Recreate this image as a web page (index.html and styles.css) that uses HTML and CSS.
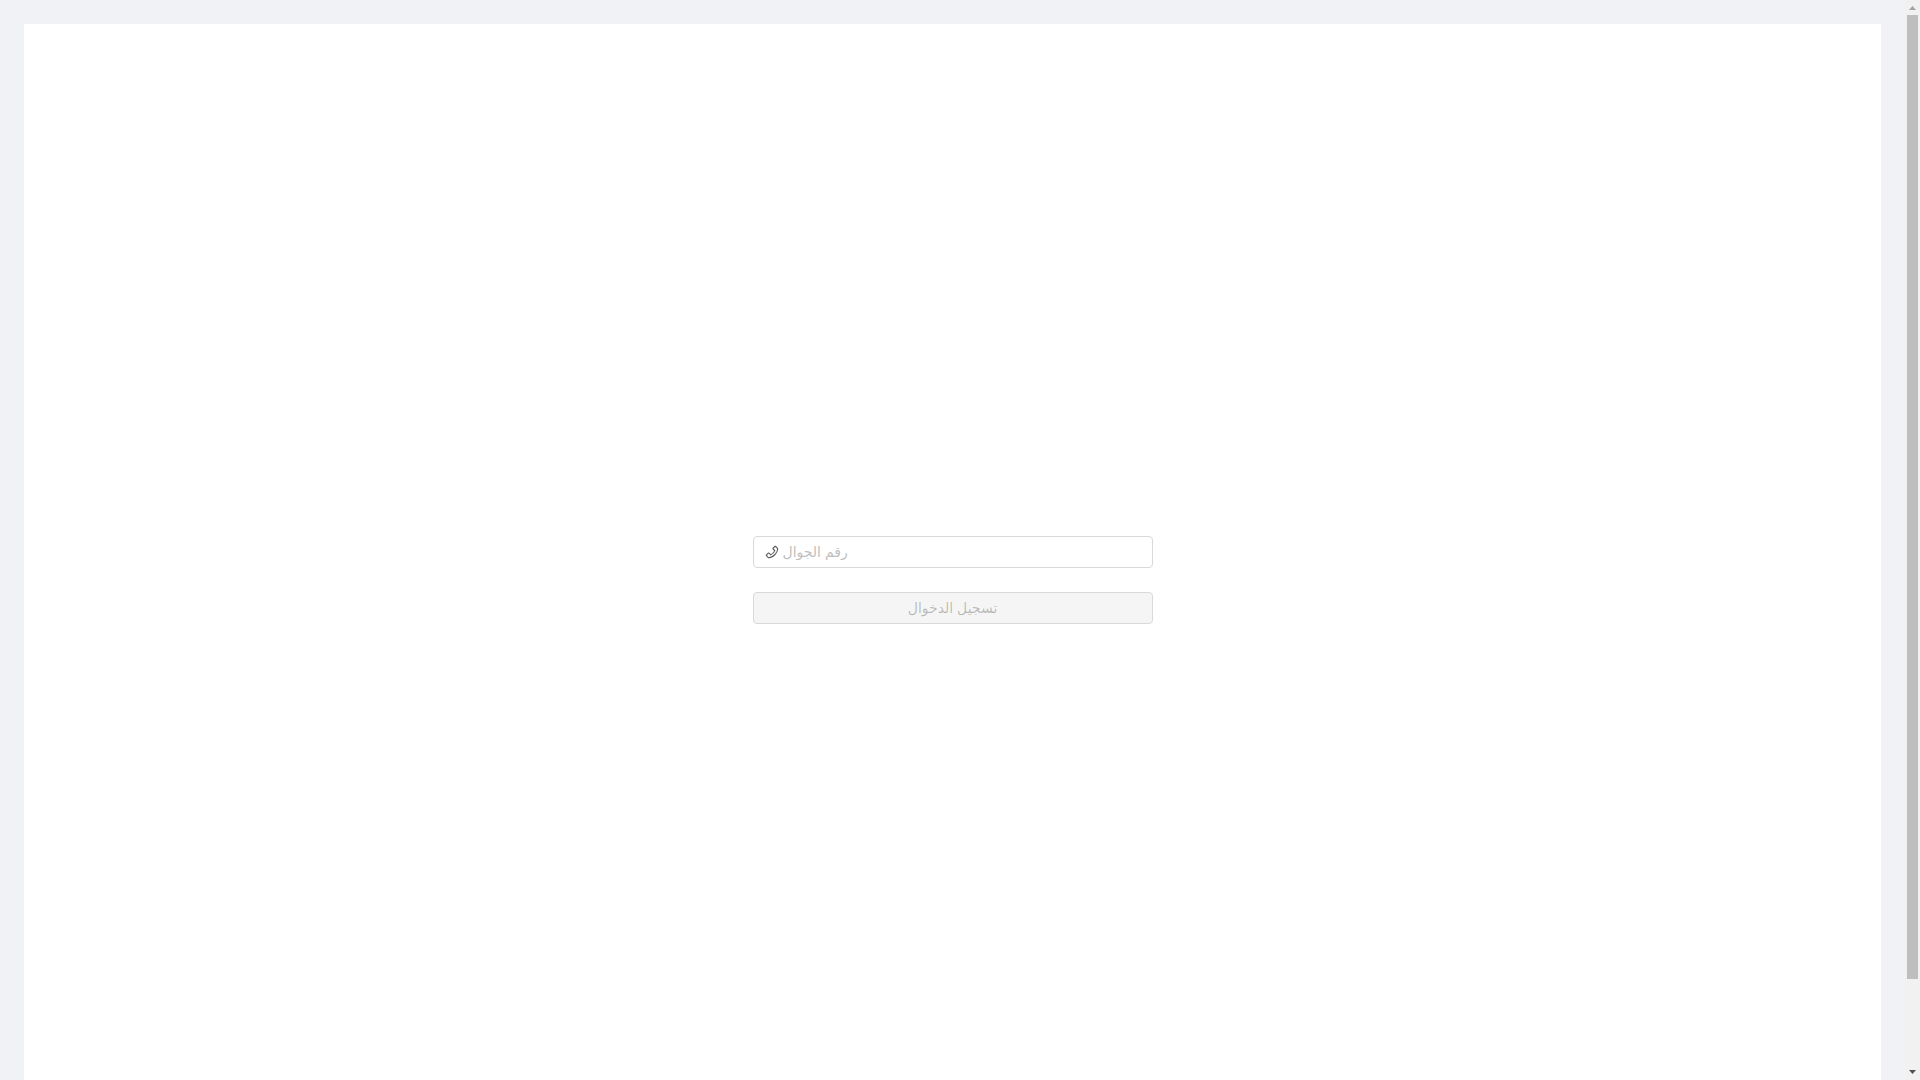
FILE: index.html
```html
<!DOCTYPE html>
<html>

<head>
    <meta charset="utf-8">
    <link rel="stylesheet" href="styles.css">
    <title>تسجيل الدخول</title>
</head>

<body>
    <div id="page-scroll">
        <div id="page-wrapper">
            <form class="login-form">
                <div class="form-item">
                    <span class="input-wrap">
                        <svg class="input-icon" viewBox="64 64 896 896" fill="currentColor" aria-hidden="true">
                            <path d="M877.1 238.7L770.6 132.3c-13-13-30.4-20.3-48.8-20.3s-35.8 7.2-48.8 20.3L558.3 246.8c-13 13-20.3 30.5-20.3 48.9 0 18.5 7.2 35.8 20.3 48.9l89.6 89.7a405.46 405.46 0 0 1-86.4 127.3c-36.7 36.9-79.6 66-127.2 86.6l-89.6-89.7c-13-13-30.4-20.3-48.8-20.3a68.2 68.2 0 0 0-48.8 20.3L132.3 673c-13 13-20.3 30.5-20.3 48.9 0 18.5 7.2 35.8 20.3 48.9l106.4 106.4c22.2 22.2 52.8 34.9 84.2 34.9 6.5 0 12.8-.5 19.2-1.6 132.4-21.8 263.8-92.3 369.9-198.3C818 606 888.4 474.6 910.4 342.1c6.3-37.6-6.3-76.3-33.3-103.4zm-37.6 91.5c-19.5 117.9-82.9 235.5-178.4 331s-213 158.9-330.9 178.4c-14.8 2.5-30-2.5-40.8-13.2L184.9 721.9 295.7 611l119.8 120 .9.9 21.6-8a481.29 481.29 0 0 0 285.7-285.8l8-21.6-120.8-120.7 110.8-110.9 104.5 104.5c10.8 10.8 15.8 26 13.3 40.8z"></path>
                        </svg>
                        <input class="phone-input" type="text" placeholder="رقم الجوال">
                    </span>
                </div>
                <div class="form-item form-item-last">
                    <button class="submit-btn" type="submit" disabled>تسجيل الدخوال</button>
                </div>
            </form>
        </div>
    </div>
    <div class="scrollbar">
        <svg class="scroll-arrow arrow-up" viewBox="0 0 7 4"><polygon points="3.5,0 7,4 0,4"></polygon></svg>
        <div class="scroll-thumb"></div>
        <svg class="scroll-arrow arrow-down" viewBox="0 0 7 4"><polygon points="0,0 7,0 3.5,4"></polygon></svg>
    </div>
</body>

</html>
```

FILE: styles.css
```css
html {
    background: #f0f2f5;
    font-family: "Liberation Sans", "DejaVu Sans", sans-serif;
    font-size: 14px;
}

body {
    display: flex;
    height: 100vh;
    margin: 0;
    overflow: hidden;
}

#page-scroll {
    flex: 1;
    min-width: 0;
    height: 100vh;
    padding: 24px;
    box-sizing: border-box;
    overflow: hidden;
}

#page-wrapper {
    display: flex;
    align-items: center;
    justify-content: center;
    height: 1128px;
    background: #fff;
}

.login-form {
    width: 400px;
}

.form-item {
    margin-bottom: 24px;
}

.form-item-last {
    margin-bottom: 16px;
}

.input-wrap {
    display: flex;
    align-items: center;
    box-sizing: border-box;
    height: 32px;
    padding: 0 11px;
    background: #fff;
    border: 1px solid #d9d9d9;
    border-radius: 4px;
}

.input-icon {
    flex: none;
    width: 14px;
    height: 14px;
    margin-right: 4px;
    color: rgba(0, 0, 0, 0.65);
}

.phone-input {
    flex: 1;
    min-width: 0;
    padding: 0;
    border: 0;
    outline: none;
    background: transparent;
    font: inherit;
}

.phone-input::placeholder {
    color: #bfbfbf;
}

.submit-btn {
    display: block;
    box-sizing: border-box;
    width: 100%;
    height: 32px;
    padding: 0 15px;
    font: inherit;
    color: rgba(0, 0, 0, 0.25);
    background: #f5f5f5;
    border: 1px solid #d9d9d9;
    border-radius: 4px;
}

/* page scrollbar, drawn because the shot has none of its own */
.scrollbar {
    flex: none;
    display: flex;
    flex-direction: column;
    align-items: center;
    box-sizing: border-box;
    width: 15px;
    height: 100vh;
    padding: 6px 0;
    background: #f1f1f1;
}

.scroll-arrow {
    flex: none;
    width: 7px;
    height: 4px;
}

.arrow-up {
    fill: #a3a3a3;
}

.arrow-down {
    margin-top: auto;
    fill: #505050;
}

.scroll-thumb {
    flex: none;
    width: 11px;
    height: 964px;
    margin-top: 5px;
    background: #bebebe;
}
```
